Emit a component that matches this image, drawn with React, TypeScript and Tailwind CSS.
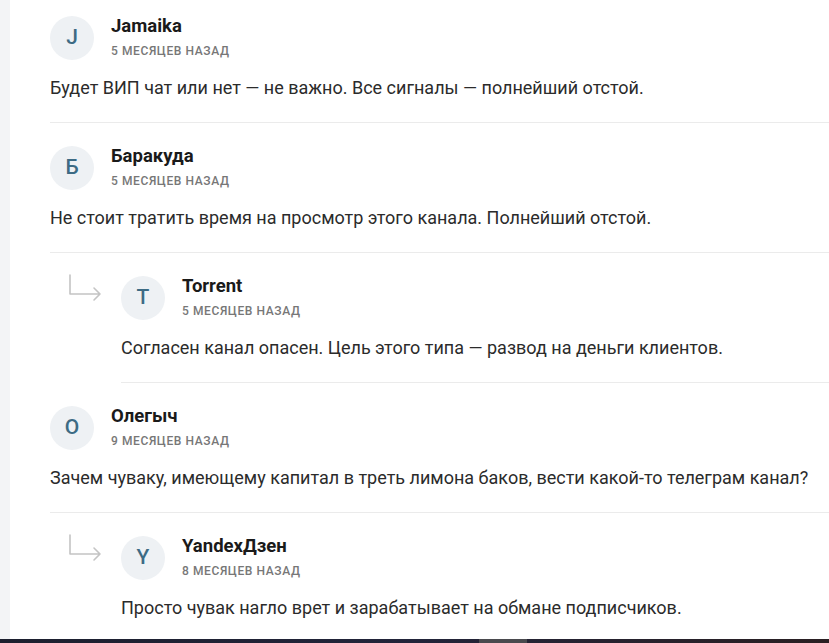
import React from "react";

interface CommentItem {
  id: number;
  author: string;
  initial: string;
  ago: string;
  text: string;
  reply?: boolean;
}

const comments: CommentItem[] = [
  {
    id: 1,
    author: "Jamaika",
    initial: "J",
    ago: "5 месяцев назад",
    text: "Будет ВИП чат или нет — не важно. Все сигналы — полнейший отстой.",
  },
  {
    id: 2,
    author: "Баракуда",
    initial: "Б",
    ago: "5 месяцев назад",
    text: "Не стоит тратить время на просмотр этого канала. Полнейший отстой.",
  },
  {
    id: 3,
    author: "Torrent",
    initial: "T",
    ago: "5 месяцев назад",
    text: "Согласен канал опасен. Цель этого типа — развод на деньги клиентов.",
    reply: true,
  },
  {
    id: 4,
    author: "Олегыч",
    initial: "О",
    ago: "9 месяцев назад",
    text: "Зачем чуваку, имеющему капитал в треть лимона баков, вести какой-то телеграм канал?",
  },
  {
    id: 5,
    author: "YandexДзен",
    initial: "Y",
    ago: "8 месяцев назад",
    text: "Просто чувак нагло врет и зарабатывает на обмане подписчиков.",
    reply: true,
  },
];

const ReplyArrow = () => (
  <svg width="36" height="30" viewBox="0 0 36 30" fill="none" className="ml-[17px] mt-[-2px]">
    <path
      d="M3 1 V20 H33 M27 14 L33 20 L27 26"
      stroke="#c4c4c4"
      strokeWidth="1.6"
      strokeLinecap="round"
      strokeLinejoin="round"
    />
  </svg>
);

const CommentBody: React.FC<{ c: CommentItem; first?: boolean; last?: boolean }> = ({ c, first, last }) => (
  <div
    className={`flex-1 ${first ? "pt-[16px]" : "pt-[23px]"} ${
      last ? "pb-[19px]" : "pb-[22px] border-b border-[#ebebeb]"
    }`}
  >
    <div className="flex items-start gap-[17px]">
      <div className="w-[44px] h-[44px] rounded-full bg-[#eef1f4] flex items-center justify-center text-[21px] font-medium text-[#3d6b84]">
        {c.initial}
      </div>
      <div className="flex flex-col">
        <span className="text-[18.5px] leading-5 font-bold text-[#1a1a1a]">{c.author}</span>
        <span className="mt-[7px] text-[12px] leading-4 font-medium uppercase tracking-[0.6px] text-[#777777]">
          {c.ago}
        </span>
      </div>
    </div>
    <p className="mt-[16px] text-[18px] leading-6 text-[#2b2b2b]">{c.text}</p>
  </div>
);

export default function App() {
  return (
    <div
      className="w-[829px] h-[643px] overflow-hidden flex flex-col bg-white"
      style={{ fontFamily: "Roboto, 'Noto Sans', sans-serif" }}
    >
      <div className="flex flex-1">
        <div className="w-[10px] bg-[#f3f4f6]" />
        <div className="flex-1 pl-[40px] flex flex-col">
          {comments.map((c, i) =>
            c.reply ? (
              <div key={c.id} className="flex">
                <div className="w-[71px] shrink-0 pt-[23px]">
                  <ReplyArrow />
                </div>
                <CommentBody c={c} last={i === comments.length - 1} />
              </div>
            ) : (
              <CommentBody key={c.id} c={c} first={i === 0} last={i === comments.length - 1} />
            )
          )}
        </div>
      </div>
      <div className="h-[4px] flex bg-gradient-to-r from-[#1c1f2e] via-[#22243a] to-[#2a1f22]">
        <div className="ml-[479px] w-[48px] bg-[#4a4a4e]" />
      </div>
    </div>
  );
}
